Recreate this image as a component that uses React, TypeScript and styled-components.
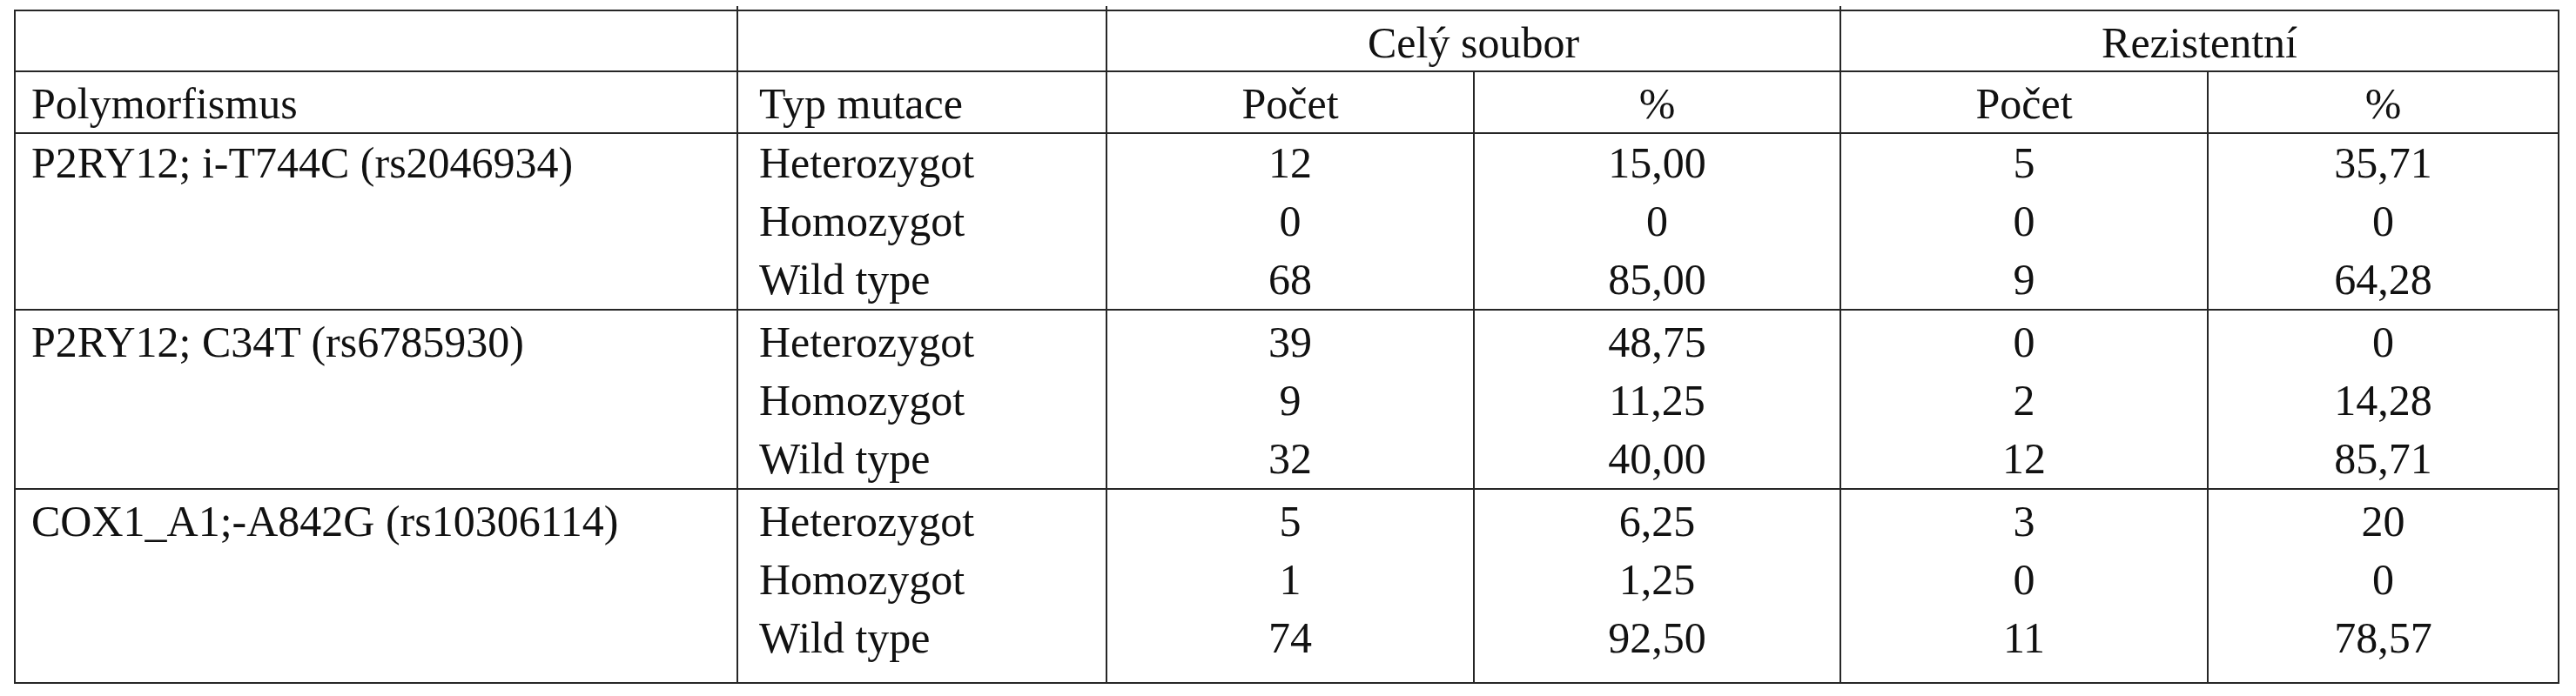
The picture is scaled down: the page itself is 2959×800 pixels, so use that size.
import React from 'react';
import styled, { createGlobalStyle } from 'styled-components';

type Align = 'left' | 'center';

interface Group {
    name: string;
    rows: string[][];
    padTop: number;
    padBottom: number;
}

const groups: Group[] = [
    {
        name: 'P2RY12; i-T744C (rs2046934)',
        rows: [
            ['Heterozygot', '12', '15,00', '5', '35,71'],
            ['Homozygot', '0', '0', '0', '0'],
            ['Wild type', '68', '85,00', '9', '64,28'],
        ],
        padTop: 0,
        padBottom: 0,
    },
    {
        name: 'P2RY12; C34T (rs6785930)',
        rows: [
            ['Heterozygot', '39', '48,75', '0', '0'],
            ['Homozygot', '9', '11,25', '2', '14,28'],
            ['Wild type', '32', '40,00', '12', '85,71'],
        ],
        padTop: 3,
        padBottom: 0,
    },
    {
        name: 'COX1_A1;-A842G (rs10306114)',
        rows: [
            ['Heterozygot', '5', '6,25', '3', '20'],
            ['Homozygot', '1', '1,25', '0', '0'],
            ['Wild type', '74', '92,50', '11', '78,57'],
        ],
        padTop: 3,
        padBottom: 17,
    },
];

const columnWidths = [830, 424, 422, 421, 422, 403];
const line = '2px solid #262626';

const GlobalStyle = createGlobalStyle`
    html, body {
        margin: 0;
        background: #ffffff;
    }
    body {
        font-family: "Liberation Serif", "Times New Roman", serif;
        color: #111111;
    }
`;

const Page = styled.div`
    padding: 11px 0 0 16px;
`;

const Table = styled.table`
    width: 2922px;
    table-layout: fixed;
    border-collapse: collapse;
    border: ${line};
    font-size: 50px;
    line-height: 67px;
`;

// header cell; the tick is the short stub of rule that pokes above the top border
const HeadCell = styled.th<{ $align: Align; $pad: number; $line: number; $tick?: boolean; $indent: number }>`
    position: relative;
    border: ${line};
    padding: ${(p) => p.$pad}px 0 0 ${(p) => p.$indent}px;
    line-height: ${(p) => p.$line}px;
    text-align: ${(p) => p.$align};
    vertical-align: top;
    font-weight: normal;
    white-space: nowrap;

    &::before {
        content: '';
        display: ${(p) => (p.$tick ? 'block' : 'none')};
        position: absolute;
        left: -2px;
        top: -6px;
        width: 2px;
        height: 5px;
        background: #262626;
    }
`;

const NameCell = styled.td<{ $padTop: number }>`
    border: ${line};
    padding: ${(p) => p.$padTop}px 0 0 18px;
    vertical-align: top;
    white-space: nowrap;
`;

const Cell = styled.td<{ $align: Align; $padTop: number; $padBottom: number; $indent: number }>`
    border-left: ${line};
    border-right: ${line};
    padding: ${(p) => p.$padTop}px 0 ${(p) => p.$padBottom}px ${(p) => p.$indent}px;
    text-align: ${(p) => p.$align};
    vertical-align: top;
    white-space: nowrap;
`;

const GroupBody = styled.tbody`
    border-top: ${line};
    border-bottom: ${line};
`;

const subHeads = ['Počet', '%', 'Počet', '%'];

export default function App() {
    return (
        <>
            <GlobalStyle />
            <Page>
                <Table>
                    <colgroup>
                        {columnWidths.map((w, i) => (
                            <col key={i} style={{ width: w }} />
                        ))}
                    </colgroup>
                    <thead>
                        <tr>
                            <HeadCell $align="left" $pad={5} $line={63} $indent={18} />
                            <HeadCell $align="left" $pad={5} $line={63} $indent={24} $tick />
                            <HeadCell $align="center" $pad={5} $line={63} $indent={0} $tick colSpan={2}>
                                Celý soubor
                            </HeadCell>
                            <HeadCell $align="center" $pad={5} $line={63} $indent={0} $tick colSpan={2}>
                                Rezistentní
                            </HeadCell>
                        </tr>
                        <tr>
                            <HeadCell $align="left" $pad={4} $line={65} $indent={18}>
                                Polymorfismus
                            </HeadCell>
                            <HeadCell $align="left" $pad={4} $line={65} $indent={24}>
                                Typ mutace
                            </HeadCell>
                            {subHeads.map((h, i) => (
                                <HeadCell key={i} $align="center" $pad={4} $line={65} $indent={0}>
                                    {h}
                                </HeadCell>
                            ))}
                        </tr>
                    </thead>
                    {groups.map((g) => (
                        <GroupBody key={g.name}>
                            {g.rows.map((row, ri) => {
                                const top = ri === 0 ? g.padTop : 0;
                                const bottom = ri === g.rows.length - 1 ? g.padBottom : 0;
                                return (
                                    <tr key={ri}>
                                        {ri === 0 && (
                                            <NameCell $padTop={g.padTop} rowSpan={g.rows.length}>
                                                {g.name}
                                            </NameCell>
                                        )}
                                        {row.map((value, ci) => (
                                            <Cell
                                                key={ci}
                                                $align={ci === 0 ? 'left' : 'center'}
                                                $indent={ci === 0 ? 24 : 0}
                                                $padTop={top}
                                                $padBottom={bottom}
                                            >
                                                {value}
                                            </Cell>
                                        ))}
                                    </tr>
                                );
                            })}
                        </GroupBody>
                    ))}
                </Table>
            </Page>
        </>
    );
}
